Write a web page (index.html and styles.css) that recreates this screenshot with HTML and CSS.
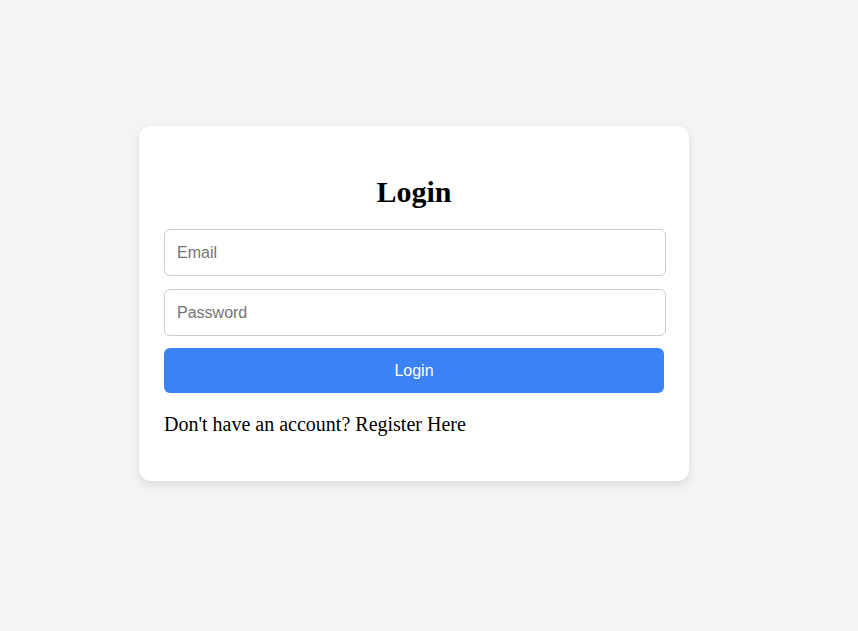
FILE: index.html
```html
<!DOCTYPE html>
<html>
<head>
<meta charset="utf-8">
<title>Login</title>
<link rel="stylesheet" href="styles.css">
</head>
<body>
<div class="page">
  <div class="card">
    <h2 class="title">Login</h2>
    <form class="form">
      <input class="field" type="email" placeholder="Email">
      <input class="field" type="password" placeholder="Password">
      <button class="btn" type="button">Login</button>
    </form>
    <p class="note">Don't have an account? Register Here</p>
  </div>
</div>
</body>
</html>
```

FILE: styles.css
```css
html, body {
  margin: 0;
  padding: 0;
  background: #f3f4f6;
}
.page {
  box-sizing: border-box;
  width: 858px;
  height: 631px;
  display: flex;
  justify-content: center;
  align-items: flex-start;
  padding-right: 30px;
  padding-top: 126px;
}
.card {
  box-sizing: border-box;
  width: 550px;
  height: 355px;
  background: #fff;
  border-radius: 12px;
  box-shadow: 0 4px 10px rgba(0, 0, 0, 0.1);
  padding: 48px 25px 0 25px;
  font-family: "Liberation Serif", "Times New Roman", serif;
}
.title {
  margin: 0 0 19px 0;
  font-size: 30px;
  line-height: 36px;
  font-weight: bold;
  text-align: center;
  color: #000;
}
.form {
  display: flex;
  flex-direction: column;
  align-items: flex-start;
}
.field {
  box-sizing: border-box;
  width: 502px;
  height: 47px;
  margin: 0 0 13px 0;
  padding: 0 12px;
  border: 1px solid #cccccc;
  border-radius: 6px;
  font-family: "Liberation Sans", Arial, sans-serif;
  font-size: 16px;
  color: #000;
  background: #fff;
  outline: none;
}
.field + .field {
  margin-bottom: 12px;
}
.field::placeholder {
  color: #757575;
}
.btn {
  box-sizing: border-box;
  width: 500px;
  height: 45px;
  border: none;
  border-radius: 6px;
  background: #3b82f6;
  color: #fff;
  font-family: "Liberation Sans", Arial, sans-serif;
  font-size: 16px;
  cursor: pointer;
}
.note {
  margin: 20px 0 0 0;
  font-size: 20px;
  line-height: 23px;
  color: #000;
}
```
